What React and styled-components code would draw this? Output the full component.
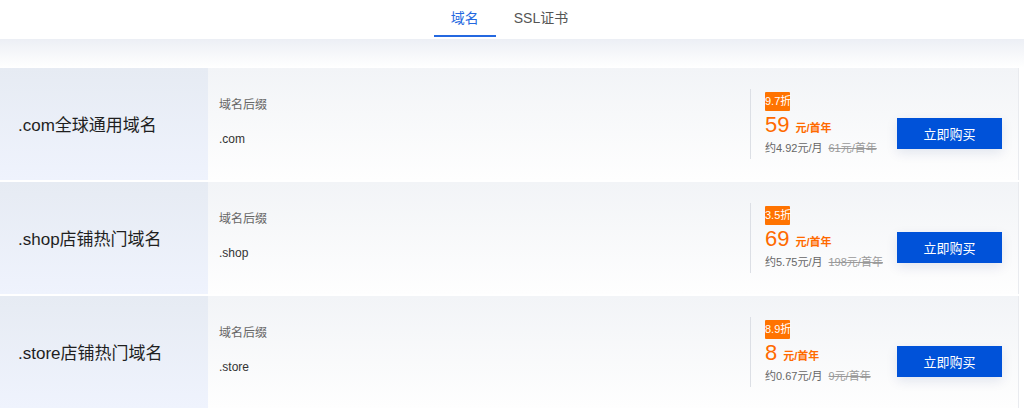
import React from "react";
import styled, { createGlobalStyle } from "styled-components";

const Global = createGlobalStyle`
  html, body { margin: 0; padding: 0; background: #fff; }
  body { font-family: "Liberation Sans", "Noto Sans CJK SC", sans-serif; color: #333; }
  * { box-sizing: border-box; }
`;

const Page = styled.div`
  width: 1024px;
  height: 411px;
  overflow: hidden;
  background: #fff;
`;

const TabBar = styled.div`
  height: 39px;
  display: flex;
  justify-content: center;
  background: #fff;
`;

const Tab = styled.div`
  height: 39px;
  padding: ${(p) => (p.$active ? "0 17px" : "0 22px 0 18px")};
  display: flex;
  align-items: center;
  font-size: 14px;
  color: ${(p) => (p.$active ? "#2468e0" : "#555")};
  border-bottom: 2px solid ${(p) => (p.$active ? "#2468e0" : "transparent")};
  margin-top: -2px;
`;

const Band = styled.div`
  height: 29px;
  background: linear-gradient(180deg, #eceff5 0%, #f8f9fb 60%, #fff 100%);
`;

const List = styled.div`
  display: flex;
  flex-direction: column;
  gap: 2px;
  width: 1019px;
`;

const Card = styled.div`
  height: 112px;
  display: flex;
  align-items: stretch;
  background: linear-gradient(180deg, #f2f4f7 0%, #fefefe 100%);
  border-right: 1px solid #e9ebef;
`;

const TitleCol = styled.div`
  width: 208px;
  flex: none;
  display: flex;
  align-items: center;
  padding: 0 0 2px 18px;
  font-size: 17px;
  color: #1f1f1f;
  background: linear-gradient(180deg, #e6ebf3 0%, #eff3fd 100%);
`;

const InfoCol = styled.div`
  flex: 1;
  padding: 30px 0 0 11px;
  display: flex;
  flex-direction: column;
`;

const Label = styled.div`
  font-size: 12px;
  line-height: 14px;
  color: #666;
`;

const Value = styled.div`
  margin-top: 20px;
  font-size: 12px;
  line-height: 14px;
  color: #333;
`;

const PriceCol = styled.div`
  width: 147px;
  flex: none;
  align-self: center;
  height: 70px;
  border-left: 1px solid #dcdfe5;
  padding-left: 14px;
  display: flex;
  flex-direction: column;
  justify-content: center;
`;

const Badge = styled.div`
  align-self: flex-start;
  height: 19px;
  width: 25px;
  background: #ff7300;
  color: #fff;
  font-size: 11px;
  line-height: 19px;
  white-space: nowrap;
  border-radius: 1px;
`;

const PriceLine = styled.div`
  display: flex;
  align-items: baseline;
  color: #ff6a00;
  margin-top: 2px;
  height: 24px;
`;

const Amount = styled.span`
  font-size: 22px;
  line-height: 24px;
`;

const Unit = styled.span`
  font-size: 11px;
  font-weight: bold;
  margin-left: 6px;
`;

const Sub = styled.div`
  display: flex;
  gap: 6px;
  font-size: 11px;
  line-height: 16px;
  color: #666;
  white-space: nowrap;
  margin-top: 3px;
`;

const Original = styled.span`
  color: #999;
  text-decoration: line-through;
`;

const BuyWrap = styled.div`
  display: flex;
  align-items: flex-start;
  padding: 50px 16px 0 0;
`;

const BuyButton = styled.button`
  width: 105px;
  height: 31px;
  border: none;
  background: #0052d9;
  color: #fff;
  font-family: inherit;
  font-size: 13px;
  cursor: pointer;
  box-shadow: 0 4px 12px rgba(0, 40, 120, 0.1);
`;

const rows = [
  { title: ".com全球通用域名", suffix: ".com", off: "9.7折", price: "59", month: "约4.92元/月", orig: "61元/首年" },
  { title: ".shop店铺热门域名", suffix: ".shop", off: "3.5折", price: "69", month: "约5.75元/月", orig: "198元/首年" },
  { title: ".store店铺热门域名", suffix: ".store", off: "8.9折", price: "8", month: "约0.67元/月", orig: "9元/首年" },
];

export default function App() {
  return (
    <Page>
      <Global />
      <TabBar>
        <Tab $active>域名</Tab>
        <Tab>SSL证书</Tab>
      </TabBar>
      <Band />
      <List>
        {rows.map((r) => (
          <Card key={r.suffix}>
            <TitleCol>{r.title}</TitleCol>
            <InfoCol>
              <Label>域名后缀</Label>
              <Value>{r.suffix}</Value>
            </InfoCol>
            <PriceCol>
              <Badge>{r.off}</Badge>
              <PriceLine>
                <Amount>{r.price}</Amount>
                <Unit>元/首年</Unit>
              </PriceLine>
              <Sub>
                <span>{r.month}</span>
                <Original>{r.orig}</Original>
              </Sub>
            </PriceCol>
            <BuyWrap>
              <BuyButton>立即购买</BuyButton>
            </BuyWrap>
          </Card>
        ))}
      </List>
    </Page>
  );
}
